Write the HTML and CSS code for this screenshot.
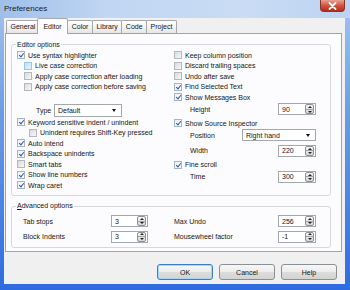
FILE: index.html
```html
<!DOCTYPE html>
<html>
<head>
<meta charset="utf-8">
<title>Preferences</title>
<link rel="stylesheet" href="styles.css">
</head>
<body>
<div class="window">
  <div class="titlebar">
    <span class="title">Preferences</span>
    <span class="close"><svg width="9" height="8" viewBox="0 0 9 8"><path d="M1.5 1 L7.5 7 M7.5 1 L1.5 7" stroke="#fff" stroke-width="1.8" stroke-linecap="round"/></svg></span>
  </div>
  <div class="client">
    <div class="tabs">
      <span class="tab">General</span>
      <span class="tab active">Editor</span>
      <span class="tab">Color</span>
      <span class="tab">Library</span>
      <span class="tab">Code</span>
      <span class="tab">Project</span>
    </div>
    <div class="panel">
      <fieldset class="group editor">
        <legend>Editor options</legend>
        <div class="cols">
          <div class="col">
            <div class="row"><i class="box on"></i>Use syntax highlighter</div>
            <div class="row in1"><i class="box hot"></i>Live case correction</div>
            <div class="row in1"><i class="box"></i>Apply case correction after loading</div>
            <div class="row in1"><i class="box"></i>Apply case correction before saving</div>
            <div class="frow type-row"><span class="lbl type-lbl">Type</span><span class="combo type-combo"><span class="val">Default</span><i class="drop"></i></span></div>
            <div class="row"><i class="box on"></i>Keyword sensitive indent / unindent</div>
            <div class="row in2"><i class="box"></i>Unindent requires Shift-Key pressed</div>
            <div class="row"><i class="box on"></i>Auto intend</div>
            <div class="row"><i class="box on"></i>Backspace unindents</div>
            <div class="row"><i class="box"></i>Smart tabs</div>
            <div class="row"><i class="box on"></i>Show line numbers</div>
            <div class="row"><i class="box on"></i>Wrap caret</div>
          </div>
          <div class="col">
            <div class="row"><i class="box"></i>Keep column position</div>
            <div class="row"><i class="box"></i>Discard trailing spaces</div>
            <div class="row"><i class="box"></i>Undo after save</div>
            <div class="row"><i class="box on"></i>Find Selected Text</div>
            <div class="row"><i class="box on"></i>Show Messages Box</div>
            <div class="frow sub"><span class="lbl">Height</span><span class="spin"><span class="num">90</span><span class="arrows"><i class="up"></i><i class="dn"></i></span></span></div>
            <div class="row"><i class="box on"></i>Show Source Inspector</div>
            <div class="frow sub"><span class="lbl">Position</span><span class="combo pos-combo"><span class="val">Right hand</span><i class="drop"></i></span></div>
            <div class="frow sub"><span class="lbl">Width</span><span class="spin"><span class="num">220</span><span class="arrows"><i class="up"></i><i class="dn"></i></span></span></div>
            <div class="row"><i class="box on"></i>Fine scroll</div>
            <div class="frow sub"><span class="lbl">Time</span><span class="spin"><span class="num">300</span><span class="arrows"><i class="up"></i><i class="dn"></i></span></span></div>
          </div>
        </div>
      </fieldset>
      <fieldset class="group advanced">
        <legend><u>A</u>dvanced options</legend>
        <div class="cols">
          <div class="col">
            <div class="arow"><span class="lbl adv-lbl">Tab stops</span><span class="spin"><span class="num">3</span><span class="arrows"><i class="up"></i><i class="dn"></i></span></span></div>
            <div class="arow"><span class="lbl adv-lbl">Block Indents</span><span class="spin"><span class="num">3</span><span class="arrows"><i class="up"></i><i class="dn"></i></span></span></div>
          </div>
          <div class="col">
            <div class="arow"><span class="lbl">Max Undo</span><span class="spin"><span class="num">256</span><span class="arrows"><i class="up"></i><i class="dn"></i></span></span></div>
            <div class="arow"><span class="lbl">Mousewheel factor</span><span class="spin"><span class="num">-1</span><span class="arrows"><i class="up"></i><i class="dn"></i></span></span></div>
          </div>
        </div>
      </fieldset>
    </div>
    <div class="buttons">
      <span class="btn default">OK</span>
      <span class="btn">Cancel</span>
      <span class="btn">Help</span>
    </div>
  </div>
</div>
</body>
</html>
```

FILE: styles.css
```css
* { box-sizing: border-box; }
html, body { margin: 0; padding: 0; }
body {
  width: 350px;
  height: 290px;
  overflow: hidden;
  font-family: "Liberation Sans", Arial, sans-serif;
  font-size: 7px;
  color: #151515;
}
.window {
  width: 350px;
  height: 290px;
  display: flex;
  flex-direction: column;
  background: linear-gradient(to bottom, #a6c4ec 0%, #6a9ce6 40%, #2f6be0 100%);
}
.titlebar {
  height: 18px;
  flex: none;
  display: flex;
  justify-content: space-between;
  align-items: flex-start;
  padding: 0 5px 0 4px;
  background: linear-gradient(to right, #9fbfea 0%, #c0d6f2 30%, #c9dcf4 70%, #bcd3f1 100%);
}
.title {
  font-size: 8px;
  line-height: 18px;
  color: #1b1b1b;
}
.close {
  width: 25px;
  height: 12px;
  border: 1px solid #8a3428;
  border-top: none;
  border-radius: 0 0 4px 4px;
  background: linear-gradient(#e8a292 0%, #d2553f 50%, #b32c19 100%);
  display: flex;
  align-items: center;
  justify-content: center;
}
.client {
  flex: 1;
  margin: 0 5px 6px 4px;
  background: #f0f0f0;
  display: flex;
  flex-direction: column;
}
.tabs {
  height: 15px;
  flex: none;
  display: flex;
  align-items: flex-end;
  padding-left: 2px;
}
.tab {
  height: 13px;
  line-height: 12px;
  padding: 0 3.5px;
  border: 1px solid #a4a9ad;
  border-bottom: none;
  border-radius: 2px 2px 0 0;
  background: linear-gradient(#ffffff, #e6e6e6);
  margin-right: -1px;
}
.tab.active {
  height: 16px;
  line-height: 15px;
  padding: 0 5.5px;
  margin: 0 -1px -1px -2px;
  background: #fcfcfe;
  position: relative;
  z-index: 1;
}
.panel {
  flex: none;
  margin: 0 3px 0 1px;
  border: 1px solid #9ea4a8;
  background: #fcfcfe;
  padding: 6.5px 10px 3px 5px;
}
.group {
  margin: 0;
  border: 1px solid #d5d8dc;
  border-radius: 3px;
  padding: 1.25px 14px 4.5px 5px;
}
.group legend {
  font-size: 7px;
  line-height: 8px;
  padding: 0 1px;
  margin-left: -1px;
}
.advanced {
  margin-top: 6px;
  padding-top: 5px;
  padding-left: 5px;
}
.cols {
  display: grid;
  grid-template-columns: 157px 1fr;
}
.col {
  display: flex;
  flex-direction: column;
}
.row {
  height: 10.5px;
  display: flex;
  align-items: center;
  white-space: nowrap;
}
.in1 { padding-left: 7px; }
.in2 { padding-left: 12px; }
.box {
  position: relative;
  flex: none;
  width: 8px;
  height: 8px;
  margin-right: 3px;
  border: 1px solid #b3b8bd;
  background: linear-gradient(135deg, #d9dbdd, #f7f7f7);
}
.box.on {
  border-color: #a6b4c6;
  background: linear-gradient(135deg, #eef0f3, #ffffff);
}
.box.on::after {
  content: "";
  position: absolute;
  left: 1.8px;
  top: 0;
  width: 2px;
  height: 4px;
  border: solid #2b56c2;
  border-width: 0 1.5px 1.5px 0;
  transform: rotate(40deg);
}
.box.hot {
  border-color: #9cc4e8;
  background: linear-gradient(135deg, #bfe0f8, #e6f3fd);
}
.frow {
  display: flex;
  align-items: center;
  white-space: nowrap;
}
.type-row {
  height: 13px;
  margin-top: 12.25px;
  padding-left: 19px;
}
.type-lbl { width: 18px; }
.sub {
  height: 12px;
  margin: 1px 0 2.5px;
  padding-left: 16px;
}
.lbl { flex: none; }
.sub .combo, .sub .spin, .arow .spin { margin-left: auto; }
.combo {
  height: 100%;
  border: 1px solid #a3a8ad;
  background: #ffffff;
  display: flex;
  align-items: center;
  padding-left: 3px;
}
.combo .val { flex: 1; }
.type-combo { width: 68px; }
.pos-combo { width: 74px; }
.drop {
  width: 0;
  height: 0;
  margin-right: 5px;
  border-top: 3px solid #111;
  border-left: 2.5px solid transparent;
  border-right: 2.5px solid transparent;
}
.spin {
  width: 38px;
  height: 12px;
  border: 1px solid #a3a8ad;
  background: #ffffff;
  display: flex;
  align-items: center;
  padding-left: 3px;
}
.spin .num { flex: 1; }
.arrows {
  width: 9px;
  height: 10px;
  margin-right: 1px;
  display: flex;
  flex-direction: column;
  border: 1px solid #8d9297;
  border-radius: 2px;
  background: linear-gradient(#f5f5f5, #d4d6d8);
}
.arrows i {
  flex: 1;
  display: flex;
  align-items: center;
  justify-content: center;
}
.arrows .up { border-bottom: 1px solid #9da2a6; }
.arrows .up::after {
  content: "";
  border-bottom: 2px solid #222;
  border-left: 2px solid transparent;
  border-right: 2px solid transparent;
}
.arrows .dn::after {
  content: "";
  border-top: 2px solid #222;
  border-left: 2px solid transparent;
  border-right: 2px solid transparent;
}
.arow {
  height: 12px;
  display: flex;
  align-items: center;
  white-space: nowrap;
}
.arow + .arow { margin-top: 3.5px; }
.adv-lbl {
  width: 94px;
  padding-left: 6px;
}
.advanced .col:first-child .spin { margin-left: 0; width: 37px; }
.buttons {
  display: flex;
  justify-content: flex-end;
  gap: 6px;
  margin-top: 12px;
  padding-right: 8px;
}
.btn {
  width: 56px;
  height: 16px;
  border: 1px solid #8b8f93;
  border-radius: 3px;
  background: linear-gradient(#f7f7f7 0%, #ececec 50%, #dddddd 51%, #d3d3d3 100%);
  display: flex;
  align-items: center;
  justify-content: center;
}
.btn.default {
  border-color: #3b7ec2;
  box-shadow: inset 0 0 0 1px #a5d6f5;
}
```
